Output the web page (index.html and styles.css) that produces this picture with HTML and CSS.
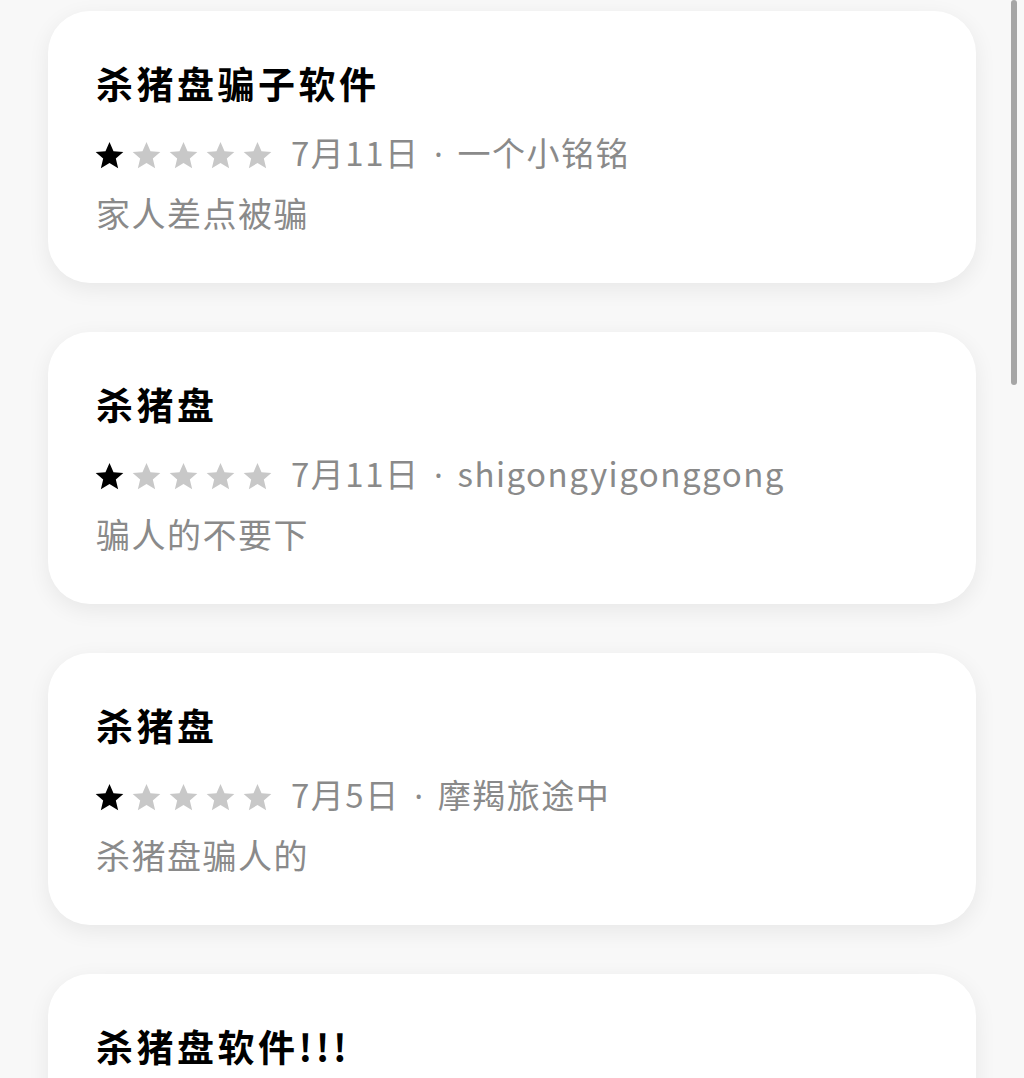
FILE: index.html
```html
<!DOCTYPE html>
<html>

<head>
    <title>评论</title>
    <meta charset="utf-8">
    <link rel="stylesheet" href="styles.css">
</head>

<body>
    <div class="scroll-bar"></div>

    <div class="review-list">
        <div class="review-card">
            <div class="review-title">杀猪盘骗子软件</div>
            <div class="review-meta">
                <span class="stars">
                    <svg class="star on" viewBox="0 0 24 24"><path d="M12 1.6l3.1 7.1 7.6.6-5.8 5 1.8 7.5L12 17.8l-6.7 4 1.8-7.5-5.8-5 7.6-.6z"/></svg>
                    <svg class="star" viewBox="0 0 24 24"><path d="M12 1.6l3.1 7.1 7.6.6-5.8 5 1.8 7.5L12 17.8l-6.7 4 1.8-7.5-5.8-5 7.6-.6z"/></svg>
                    <svg class="star" viewBox="0 0 24 24"><path d="M12 1.6l3.1 7.1 7.6.6-5.8 5 1.8 7.5L12 17.8l-6.7 4 1.8-7.5-5.8-5 7.6-.6z"/></svg>
                    <svg class="star" viewBox="0 0 24 24"><path d="M12 1.6l3.1 7.1 7.6.6-5.8 5 1.8 7.5L12 17.8l-6.7 4 1.8-7.5-5.8-5 7.6-.6z"/></svg>
                    <svg class="star" viewBox="0 0 24 24"><path d="M12 1.6l3.1 7.1 7.6.6-5.8 5 1.8 7.5L12 17.8l-6.7 4 1.8-7.5-5.8-5 7.6-.6z"/></svg>
                </span>
                <span class="meta-text">7月11日<span class="dot">·</span>一个小铭铭</span>
            </div>
            <div class="review-body">家人差点被骗</div>
        </div>

        <div class="review-card">
            <div class="review-title">杀猪盘</div>
            <div class="review-meta">
                <span class="stars">
                    <svg class="star on" viewBox="0 0 24 24"><path d="M12 1.6l3.1 7.1 7.6.6-5.8 5 1.8 7.5L12 17.8l-6.7 4 1.8-7.5-5.8-5 7.6-.6z"/></svg>
                    <svg class="star" viewBox="0 0 24 24"><path d="M12 1.6l3.1 7.1 7.6.6-5.8 5 1.8 7.5L12 17.8l-6.7 4 1.8-7.5-5.8-5 7.6-.6z"/></svg>
                    <svg class="star" viewBox="0 0 24 24"><path d="M12 1.6l3.1 7.1 7.6.6-5.8 5 1.8 7.5L12 17.8l-6.7 4 1.8-7.5-5.8-5 7.6-.6z"/></svg>
                    <svg class="star" viewBox="0 0 24 24"><path d="M12 1.6l3.1 7.1 7.6.6-5.8 5 1.8 7.5L12 17.8l-6.7 4 1.8-7.5-5.8-5 7.6-.6z"/></svg>
                    <svg class="star" viewBox="0 0 24 24"><path d="M12 1.6l3.1 7.1 7.6.6-5.8 5 1.8 7.5L12 17.8l-6.7 4 1.8-7.5-5.8-5 7.6-.6z"/></svg>
                </span>
                <span class="meta-text">7月11日<span class="dot">·</span>shigongyigonggong</span>
            </div>
            <div class="review-body">骗人的不要下</div>
        </div>

        <div class="review-card">
            <div class="review-title">杀猪盘</div>
            <div class="review-meta">
                <span class="stars">
                    <svg class="star on" viewBox="0 0 24 24"><path d="M12 1.6l3.1 7.1 7.6.6-5.8 5 1.8 7.5L12 17.8l-6.7 4 1.8-7.5-5.8-5 7.6-.6z"/></svg>
                    <svg class="star" viewBox="0 0 24 24"><path d="M12 1.6l3.1 7.1 7.6.6-5.8 5 1.8 7.5L12 17.8l-6.7 4 1.8-7.5-5.8-5 7.6-.6z"/></svg>
                    <svg class="star" viewBox="0 0 24 24"><path d="M12 1.6l3.1 7.1 7.6.6-5.8 5 1.8 7.5L12 17.8l-6.7 4 1.8-7.5-5.8-5 7.6-.6z"/></svg>
                    <svg class="star" viewBox="0 0 24 24"><path d="M12 1.6l3.1 7.1 7.6.6-5.8 5 1.8 7.5L12 17.8l-6.7 4 1.8-7.5-5.8-5 7.6-.6z"/></svg>
                    <svg class="star" viewBox="0 0 24 24"><path d="M12 1.6l3.1 7.1 7.6.6-5.8 5 1.8 7.5L12 17.8l-6.7 4 1.8-7.5-5.8-5 7.6-.6z"/></svg>
                </span>
                <span class="meta-text">7月5日<span class="dot">·</span>摩羯旅途中</span>
            </div>
            <div class="review-body">杀猪盘骗人的</div>
        </div>

        <div class="review-card">
            <div class="review-title">杀猪盘软件!!!</div>
        </div>
    </div>
</body>

</html>
```

FILE: styles.css
```css
html,
body {
    margin: 0;
    height: 1078px;
    overflow: hidden;
}

body {
    background-color: #f8f8f8;
    font-family: "Noto Sans CJK SC", "Noto Sans", sans-serif;
    position: relative;
}

.scroll-bar {
    position: absolute;
    top: 0;
    left: 1011px;
    width: 6px;
    height: 385px;
    border-radius: 3px;
    background-color: #a6a6a6;
}

.review-list {
    display: flex;
    flex-direction: column;
    gap: 49px;
    padding: 11px 48px 0 48px;
}

.review-card {
    background-color: #ffffff;
    border-radius: 42px;
    box-shadow: 0 6px 22px rgba(0, 0, 0, 0.07);
    height: 272px;
    padding: 48px 48px 0 48px;
    box-sizing: border-box;
}

.review-title {
    font-size: 37px;
    line-height: 48px;
    font-weight: 700;
    letter-spacing: 3.5px;
    color: #000000;
    margin-bottom: 26px;
}

.review-meta {
    display: flex;
    align-items: center;
    height: 44px;
    margin-bottom: 14px;
}

.stars {
    display: flex;
    gap: 6px;
    margin-left: -2px;
    margin-right: 18px;
}

.star {
    width: 31px;
    height: 31px;
    fill: #c8c8c8;
}

.star.on {
    fill: #000000;
}

.meta-text {
    font-size: 33px;
    line-height: 44px;
    letter-spacing: 1.5px;
    color: #8a8a8a;
    position: relative;
    top: -2px;
}

.dot {
    display: inline-block;
    width: 38px;
    text-align: center;
    font-family: "Noto Sans", sans-serif;
    letter-spacing: 0;
}

.review-body {
    font-size: 34px;
    line-height: 44px;
    letter-spacing: 1.5px;
    color: #8a8a8a;
}
```
